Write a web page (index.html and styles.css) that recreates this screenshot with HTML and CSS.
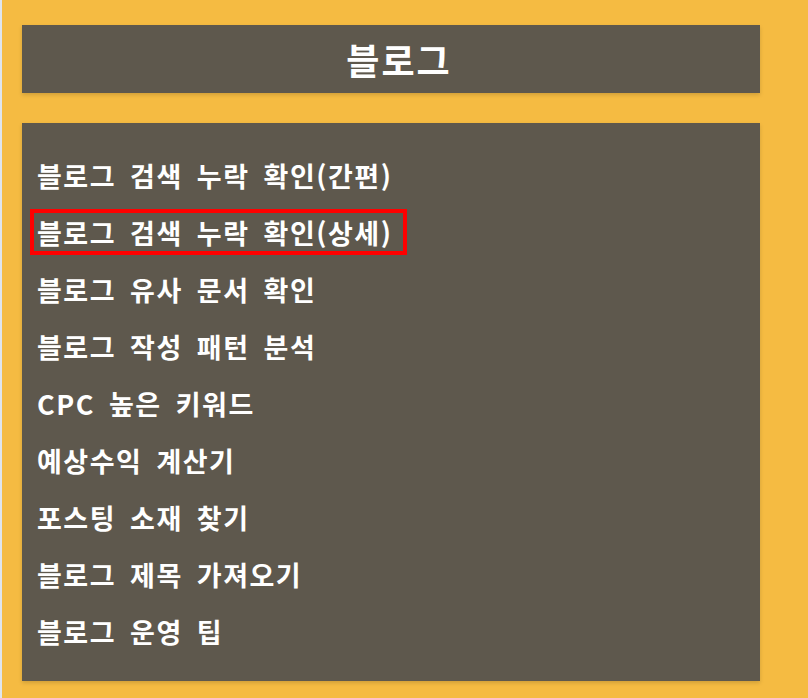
FILE: index.html
```html
<!DOCTYPE html>
<html lang="ko">
<head>
    <meta charset="utf-8">
    <title>블로그</title>
    <link rel="stylesheet" href="styles.css">
</head>
<body>
    <div class="page">
        <div class="title-box">
            <h1>블로그</h1>
        </div>
        <ul class="menu">
            <li><a href="#">블로그 검색 누락 확인(간편)</a></li>
            <li class="active"><a href="#">블로그 검색 누락 확인(상세)</a></li>
            <li><a href="#">블로그 유사 문서 확인</a></li>
            <li><a href="#">블로그 작성 패턴 분석</a></li>
            <li><a href="#">CPC 높은 키워드</a></li>
            <li><a href="#">예상수익 계산기</a></li>
            <li><a href="#">포스팅 소재 찾기</a></li>
            <li><a href="#">블로그 제목 가져오기</a></li>
            <li><a href="#">블로그 운영 팁</a></li>
        </ul>
    </div>
</body>
</html>
```

FILE: styles.css
```css
html, body {
    height: 100%;
}

body {
    margin: 0;
    background-color: #f5bb42;
    border-left: 2px solid #dfe5ec;
    font-family: "Noto Sans CJK KR", "Noto Sans", sans-serif;
    color: #ffffff;
}

.page {
    width: 738px;
    padding: 25px 0 0 20px;
}

.title-box {
    background-color: #5e584d;
    height: 68px;
    display: flex;
    align-items: center;
    justify-content: center;
    box-shadow: 0px 2px 4px rgba(0, 0, 0, 0.15);
}

.title-box h1 {
    margin: 0;
    padding-left: 16px;
    font-size: 36px;
    font-weight: bold;
    letter-spacing: 2px;
}

.menu {
    list-style: none;
    margin: 30px 0 0 0;
    padding: 29px 0 27px 0;
    background-color: #5e584d;
    box-shadow: 0px 2px 4px rgba(0, 0, 0, 0.15);
}

.menu li {
    margin-left: 8px;
    width: 377px;
    height: 46px;
    margin-bottom: 11px;
    border: 4px solid transparent;
    box-sizing: border-box;
    display: flex;
    align-items: center;
    padding-left: 3px;
}

.menu li:last-child {
    margin-bottom: 0;
}

.menu li.active {
    border-color: #ff0000;
}

.menu a {
    color: #ffffff;
    text-decoration: none;
    font-size: 27px;
    font-weight: bold;
    letter-spacing: 1.5px;
    word-spacing: 5px;
    white-space: nowrap;
}
```
